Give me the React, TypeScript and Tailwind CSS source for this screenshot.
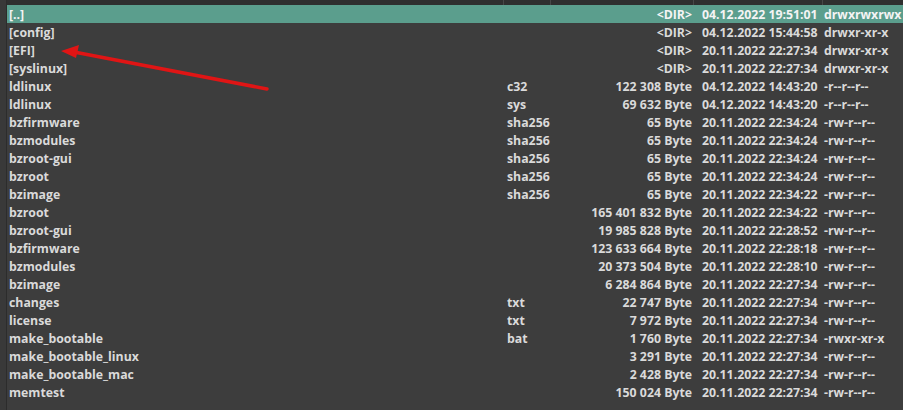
import React from 'react';

type Entry = {
  name: string;
  ext?: string;
  size: string;
  date: string;
  attr: string;
};

const entries: Entry[] = [
  { name: '[..]', size: '<DIR>', date: '04.12.2022 19:51:01', attr: 'drwxrwxrwx' },
  { name: '[config]', size: '<DIR>', date: '04.12.2022 15:44:58', attr: 'drwxr-xr-x' },
  { name: '[EFI]', size: '<DIR>', date: '20.11.2022 22:27:34', attr: 'drwxr-xr-x' },
  { name: '[syslinux]', size: '<DIR>', date: '20.11.2022 22:27:34', attr: 'drwxr-xr-x' },
  { name: 'ldlinux', ext: 'c32', size: '122 308 Byte', date: '04.12.2022 14:43:20', attr: '-r--r--r--' },
  { name: 'ldlinux', ext: 'sys', size: '69 632 Byte', date: '04.12.2022 14:43:20', attr: '-r--r--r--' },
  { name: 'bzfirmware', ext: 'sha256', size: '65 Byte', date: '20.11.2022 22:34:24', attr: '-rw-r--r--' },
  { name: 'bzmodules', ext: 'sha256', size: '65 Byte', date: '20.11.2022 22:34:24', attr: '-rw-r--r--' },
  { name: 'bzroot-gui', ext: 'sha256', size: '65 Byte', date: '20.11.2022 22:34:24', attr: '-rw-r--r--' },
  { name: 'bzroot', ext: 'sha256', size: '65 Byte', date: '20.11.2022 22:34:24', attr: '-rw-r--r--' },
  { name: 'bzimage', ext: 'sha256', size: '65 Byte', date: '20.11.2022 22:34:22', attr: '-rw-r--r--' },
  { name: 'bzroot', size: '165 401 832 Byte', date: '20.11.2022 22:34:22', attr: '-rw-r--r--' },
  { name: 'bzroot-gui', size: '19 985 828 Byte', date: '20.11.2022 22:28:52', attr: '-rw-r--r--' },
  { name: 'bzfirmware', size: '123 633 664 Byte', date: '20.11.2022 22:28:18', attr: '-rw-r--r--' },
  { name: 'bzmodules', size: '20 373 504 Byte', date: '20.11.2022 22:28:10', attr: '-rw-r--r--' },
  { name: 'bzimage', size: '6 284 864 Byte', date: '20.11.2022 22:27:34', attr: '-rw-r--r--' },
  { name: 'changes', ext: 'txt', size: '22 747 Byte', date: '20.11.2022 22:27:34', attr: '-rw-r--r--' },
  { name: 'license', ext: 'txt', size: '7 972 Byte', date: '20.11.2022 22:27:34', attr: '-rw-r--r--' },
  { name: 'make_bootable', ext: 'bat', size: '1 760 Byte', date: '20.11.2022 22:27:34', attr: '-rwxr-xr-x' },
  { name: 'make_bootable_linux', size: '3 291 Byte', date: '20.11.2022 22:27:34', attr: '-rw-r--r--' },
  { name: 'make_bootable_mac', size: '2 428 Byte', date: '20.11.2022 22:27:34', attr: '-rw-r--r--' },
  { name: 'memtest', size: '150 024 Byte', date: '20.11.2022 22:27:34', attr: '-rw-r--r--' },
];

const cols = 'grid grid-cols-[496px_47px_143px_129px_81px]';

const Row: React.FC<{ entry: Entry; selected?: boolean }> = ({ entry, selected }) => (
  <div
    className={`${cols} h-[18px] pt-[1px] leading-[18px] whitespace-nowrap ${
      selected ? 'bg-[#5b9e8d] text-[#f4f4f4]' : 'text-[#dadada]'
    }`}
  >
    <span className="pl-[2px]">{entry.name}</span>
    <span className="pl-[4px]">{entry.ext ?? ''}</span>
    <span className="text-right pr-[1px]">{entry.size}</span>
    <span className="pl-[9px]">{entry.date}</span>
    <span className="pl-[2px]">{entry.attr}</span>
  </div>
);

const Arrow = () => (
  <svg className="absolute left-0 top-0 pointer-events-none" width="903" height="410">
    <line x1="267" y1="89" x2="74" y2="52" stroke="#e01515" strokeWidth="3.5" strokeLinecap="round" />
    <polygon points="61,51 79,45 76,58" fill="#e01515" />
  </svg>
);

export default function App() {
  return (
    <div
      className="relative w-[903px] h-[410px] bg-[#3d3d3d] flex overflow-hidden text-[12.3px] font-bold"
      style={{ fontFamily: '"Open Sans", "DejaVu Sans", sans-serif' }}
    >
      <div className="w-[7px] shrink-0 bg-[#393939] border-r border-[#2c2c2c]" />
      <div className="flex-1 flex flex-col">
        <div className={`${cols} h-[5px] bg-[#2f2f2f]`}>
          <div />
          <div className="border-l border-[#474747]" />
          <div className="border-l border-[#474747]" />
          <div className="border-l border-[#474747]" />
          <div className="border-l border-[#474747]" />
        </div>
        {entries.map((e, i) => (
          <Row key={i} entry={e} selected={i === 0} />
        ))}
      </div>
      <Arrow />
    </div>
  );
}
